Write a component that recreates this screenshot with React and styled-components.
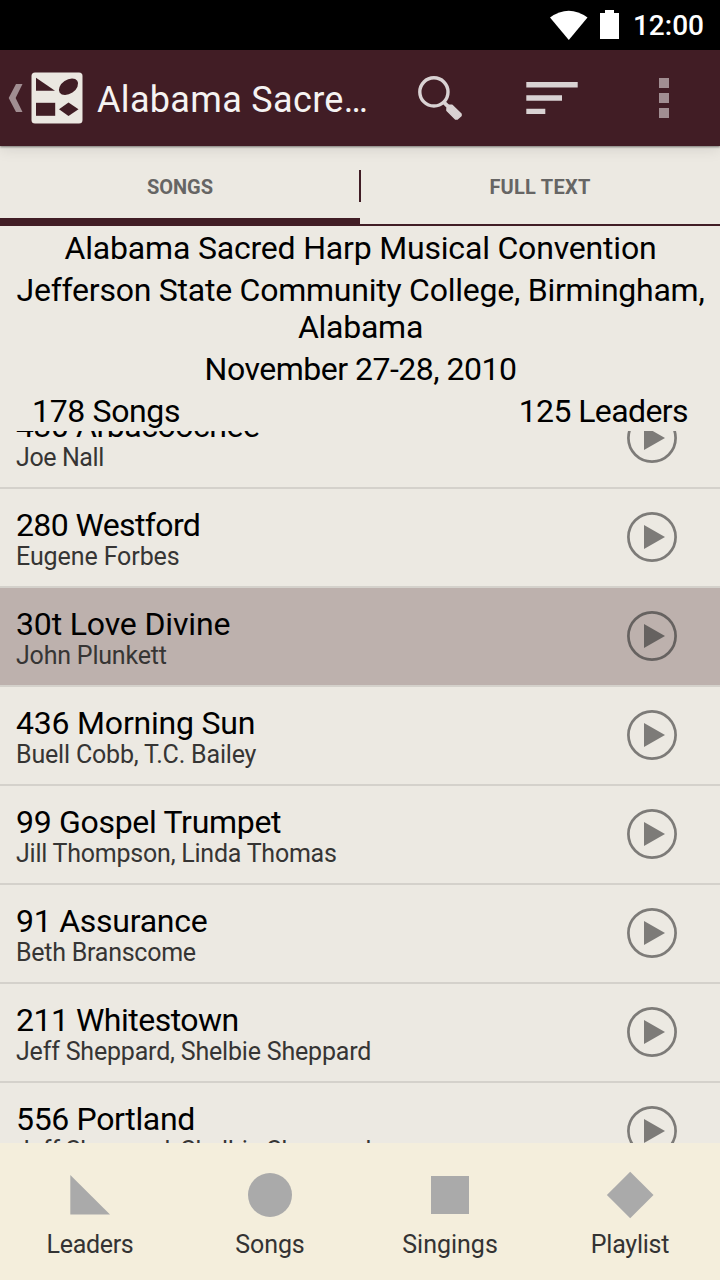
import React from 'react';
import styled, { createGlobalStyle } from 'styled-components';

const GlobalStyle = createGlobalStyle`
  * { box-sizing: border-box; }
  body { margin: 0; background: #ece9e2; }
`;

const Screen = styled.div`
  display: flex;
  flex-direction: column;
  width: 720px;
  height: 1280px;
  overflow: hidden;
  background: #ece9e2;
  color: #000;
  font-family: Roboto, "Liberation Sans", sans-serif;
`;

const StatusBar = styled.div`
  display: flex;
  flex: none;
  align-items: center;
  justify-content: flex-end;
  height: 50px;
  padding-right: 16px;
  background: #000;
  color: #fff;
`;

const StatusIcons = styled.svg`
  width: 70px;
  height: 30px;
  margin-right: 13px;
`;

const Clock = styled.span`
  font-size: 28px;
  font-weight: 500;
  line-height: 50px;
  padding-top: 2px;
`;

const ActionBar = styled.header`
  display: flex;
  flex: none;
  align-items: center;
  height: 96px;
  padding: 0 24px 0 8px;
  background: #411d25;
  box-shadow: 0 1px 2px rgba(0, 0, 0, 0.45), 0 3px 14px rgba(0, 0, 0, 0.1);
  z-index: 1;
`;

const UpArrow = styled.svg`
  width: 15px;
  height: 30px;
  margin-right: 8px;
`;

const AppLogo = styled.svg`
  width: 52px;
  height: 52px;
  margin-right: 14px;
`;

const Title = styled.h1`
  flex: 1;
  margin: 0;
  padding-top: 4px;
  color: #f5f3f2;
  font-size: 36px;
  font-weight: 400;
  letter-spacing: 0.33px;
  line-height: 42px;
  white-space: nowrap;
`;

const Actions = styled.div`
  display: flex;
  align-items: center;
`;

const ActionIcon = styled.svg`
  width: ${(p) => p.$width}px;
  height: 96px;
`;

const TabBar = styled.nav`
  display: flex;
  flex: none;
  align-items: stretch;
  height: 80px;
  border-bottom: 2px solid #411d25;
`;

const Tab = styled.div`
  flex: 1;
  height: 80px;
  padding-top: 1px;
  border-bottom: ${(p) => (p.$active ? '8px solid #411d25' : '0')};
  color: #666564;
  font-size: 20px;
  font-weight: 700;
  letter-spacing: ${(p) => p.$tracking || 0}px;
  line-height: 80px;
  text-align: center;
`;

const TabDivider = styled.span`
  width: 2px;
  height: 32px;
  margin: 24px -1px 0;
  background: #411d25;
`;

const Summary = styled.section`
  display: flex;
  flex: none;
  flex-direction: column;
  gap: 5px;
  height: 205px;
  padding: 4px 0 0;
  font-size: 32px;
  line-height: 37px;
  text-align: center;
`;

const SummaryLine = styled.div`
  padding: 0 1px 0 2px;
  letter-spacing: ${(p) => p.$tracking}px;
`;

const Counts = styled.div`
  display: flex;
  justify-content: space-between;
  padding: 0 32px;
`;

const Count = styled.span`
  letter-spacing: ${(p) => p.$tracking}px;
`;

const SongList = styled.main`
  display: flex;
  flex: 1;
  flex-direction: column;
  justify-content: flex-start;
  min-height: 0;
  overflow: hidden;
`;

const SongRow = styled.div`
  display: flex;
  flex: none;
  align-items: flex-start;
  justify-content: space-between;
  height: 99px;
  padding: 0 43px 0 16px;
  border-bottom: 2px solid #d4d1cb;
  background: ${(p) => (p.$selected ? '#bdb1ad' : 'transparent')};
  color: ${(p) => (p.$selected ? '#666260' : '#7d7b78')};

  &:first-child { margin-top: -41px; }
`;

const SongText = styled.div`
  padding-top: 18px;
`;

const SongTitle = styled.div`
  color: #000;
  font-size: 32px;
  letter-spacing: ${(p) => p.$tracking}px;
  line-height: 37px;
`;

const SongLeader = styled.div`
  color: #363534;
  font-size: 25px;
  letter-spacing: ${(p) => p.$tracking}px;
  line-height: 26px;
`;

const PlayButton = styled.svg`
  width: 50px;
  height: 50px;
  margin-top: 23px;
`;

const BottomNav = styled.nav`
  display: flex;
  flex: none;
  height: 137px;
  background: #f4eedc;
`;

const NavItem = styled.div`
  display: flex;
  flex: 1;
  flex-direction: column;
  align-items: center;
  padding-top: 28px;
  color: #333;
  font-size: 25px;
  letter-spacing: ${(p) => p.$tracking}px;
  line-height: 30px;
`;

const NavShape = styled.svg`
  width: 48px;
  height: 48px;
  margin-bottom: 11px;
  fill: #aaa;
`;

const songs = [
  ['430 Arbacoochee', -0.47, 'Joe Nall', -0.4],
  ['280 Westford', -0.62, 'Eugene Forbes', -0.1],
  ['30t Love Divine', -0.15, 'John Plunkett', -0.2],
  ['436 Morning Sun', -0.2, 'Buell Cobb, T.C. Bailey', -0.18],
  ['99 Gospel Trumpet', -0.3, 'Jill Thompson, Linda Thomas', -0.23],
  ['91 Assurance', -0.25, 'Beth Branscome', -0.25],
  ['211 Whitestown', -0.5, 'Jeff Sheppard, Shelbie Sheppard', -0.19],
  ['556 Portland', -0.35, 'Jeff Sheppard, Shelbie Sheppard', -0.19],
];

const navItems = [
  ['Leaders', -0.3, <path d="M4.3 4V43.6H44Z" />],
  ['Songs', -0.1, <circle cx="24" cy="24" r="22" />],
  ['Singings', 0, <path d="M5 5H43V43H5Z" />],
  ['Playlist', -0.25, <path d="M24.2 .7L47.5 24L24.2 47.3L.9 24Z" />],
];

export default function App() {
  return (
    <Screen>
      <GlobalStyle />
      <StatusBar>
        <StatusIcons viewBox="0 0 70 30" fill="#fff">
          <path d="M0 7.5Q18.7-6 37.5 7.5L18.8 30Z" />
          <path d="M55 0H64V3H69V29H50V3H55Z" />
        </StatusIcons>
        <Clock>12:00</Clock>
      </StatusBar>
      <ActionBar>
        <UpArrow viewBox="0 0 15 30" fill="#a18e92">
          <path d="M8 1H14.5L7.6 15L14.5 29H8L.7 15Z" />
        </UpArrow>
        <AppLogo viewBox="0 0 52 52" fill="#411d25">
          <rect x=".5" y=".5" width="51" height="51" rx="3.5" fill="#ebe7e1" />
          <path d="M5 5.7V18.8H24Z" />
          <ellipse cx="37.5" cy="14.8" rx="10.6" ry="7" transform="rotate(-34 37.5 14.8)" />
          <path d="M5 30.8H24.2V43.8H5Z" />
          <path d="M37.5 30.5L47.5 37.3L37.5 44L28 37.3Z" />
        </AppLogo>
        <Title>Alabama Sacre…</Title>
        <Actions>
          <ActionIcon $width={112} viewBox="384 50 112 96">
            <circle cx="433.9" cy="91.9" r="14.1" fill="none" stroke="#d9d2d3" strokeWidth="3.4" />
            <path d="M443.5 101.8L449 107.3" stroke="#d9d2d3" strokeWidth="3.8" />
            <path
              d="M447 108.5L448.7 105.2H452L461 114V115.7L457.3 119H455.5L447 110.5Z"
              fill="#d9d2d3"
              stroke="#d9d2d3"
              strokeWidth="1.6"
              strokeLinejoin="round"
            />
          </ActionIcon>
          <ActionIcon $width={112} viewBox="496 50 112 96" fill="#d9d2d3">
            <path d="M526.3 82H577.7V87.4H526.3ZM526.3 95.2H562V100.8H526.3ZM526.3 108.7H545.3V114H526.3Z" />
          </ActionIcon>
          <ActionIcon $width={88} viewBox="608 50 88 96" fill="#a18e92">
            <path d="M659 78H669V88H659ZM659 93H669V103H659ZM659 108H669V118H659Z" />
          </ActionIcon>
        </Actions>
      </ActionBar>
      <TabBar>
        <Tab $active>SONGS</Tab>
        <TabDivider />
        <Tab $tracking={0.25}>FULL TEXT</Tab>
      </TabBar>
      <Summary>
        <SummaryLine $tracking={-0.19}>Alabama Sacred Harp Musical Convention</SummaryLine>
        <SummaryLine $tracking={-0.24}>Jefferson State Community College, Birmingham, Alabama</SummaryLine>
        <SummaryLine $tracking={-0.5}>November 27-28, 2010</SummaryLine>
        <Counts>
          <Count $tracking={-0.35}>178 Songs</Count>
          <Count $tracking={-0.6}>125 Leaders</Count>
        </Counts>
      </Summary>
      <SongList>
        {songs.map(([title, titleTracking, leader, leaderTracking]) => (
          <SongRow key={title} $selected={title === '30t Love Divine'}>
            <SongText>
              <SongTitle $tracking={titleTracking}>{title}</SongTitle>
              <SongLeader $tracking={leaderTracking}>{leader}</SongLeader>
            </SongText>
            <PlayButton viewBox="0 0 50 50">
              <circle cx="25" cy="25" r="23.6" fill="none" stroke="currentColor" strokeWidth="2.7" />
              <path d="M17 13V37L38 25Z" fill="currentColor" />
            </PlayButton>
          </SongRow>
        ))}
      </SongList>
      <BottomNav>
        {navItems.map(([label, tracking, shape]) => (
          <NavItem key={label} $tracking={tracking}>
            <NavShape viewBox="0 0 48 48">{shape}</NavShape>
            {label}
          </NavItem>
        ))}
      </BottomNav>
    </Screen>
  );
}
